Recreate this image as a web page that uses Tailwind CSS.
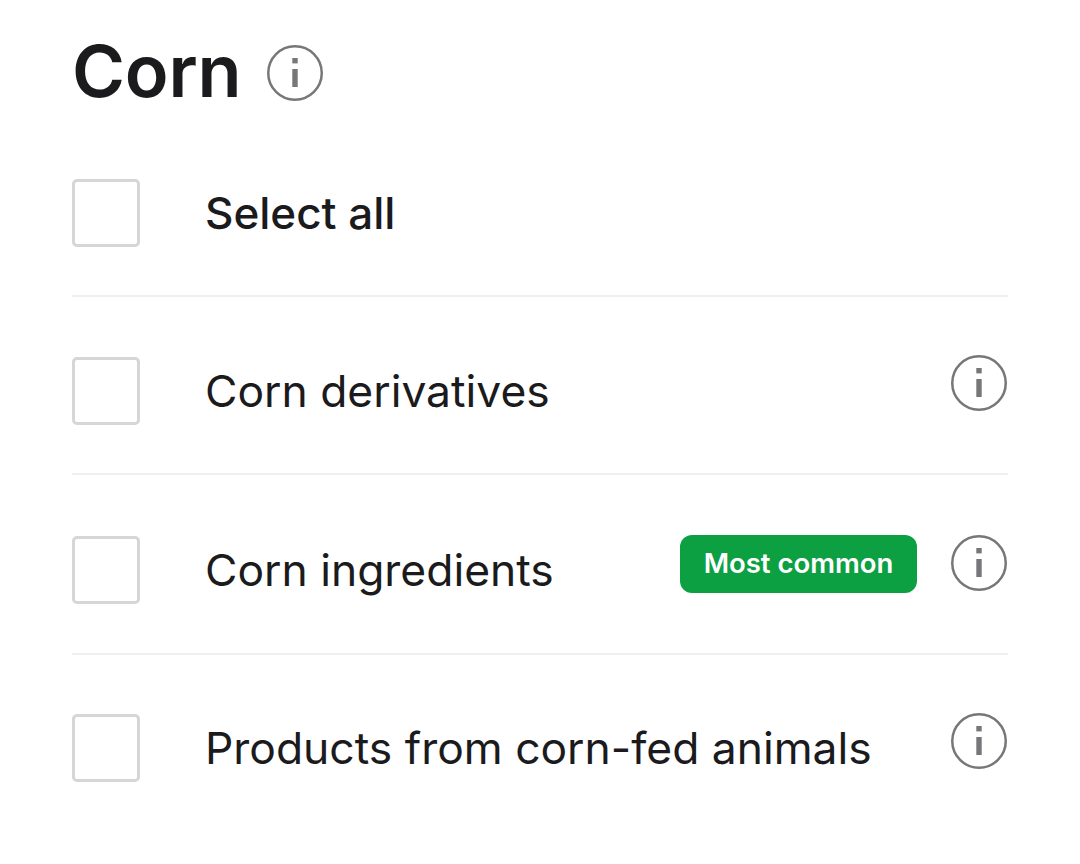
<!DOCTYPE html>
<html><head><meta charset="utf-8"><script src="https://cdn.jsdelivr.net/npm/@tailwindcss/browser@4"></script></head>
<body class="bg-white">
<div class="w-[1080px] h-[864px] overflow-hidden pl-[72px] pr-[72px] pt-[45px] text-[#1b1b1d] font-['Inter',sans-serif]">
  <div class="flex items-center h-[56px]">
    <h1 class="w-[195px] pb-[5px] text-[72px] leading-[56px] font-semibold tracking-[-0.25px]">Corn</h1>
    <svg class="w-[56px] h-[56px]" viewBox="0 0 56 56" fill="none"><circle cx="28" cy="28" r="26.75" stroke="#77777a" stroke-width="2.5"/><rect x="25.3" y="13" width="5.4" height="5.4" fill="#77777a"/><rect x="25.3" y="24" width="5.4" height="18" fill="#77777a"/></svg>
  </div>
  <div class="flex items-center pt-[78px] pb-[48px] border-b-2 border-[#efefef]">
    <div class="w-[68px] h-[68px] rounded-[5px] border-[3px] border-[#d6d6d6] shrink-0"></div>
    <span class="ml-[65px] text-[44px] leading-[50px] font-medium">Select all</span>
  </div>
  <div class="flex items-center pt-[60px] pb-[48px] border-b-2 border-[#efefef]">
    <div class="w-[68px] h-[68px] rounded-[5px] border-[3px] border-[#d6d6d6] shrink-0"></div>
    <span class="ml-[65px] text-[44.4px] leading-[50px] flex-1">Corn derivatives</span>
    <svg class="w-[56px] h-[56px] -translate-y-[8px] -translate-x-[1px]" viewBox="0 0 56 56" fill="none"><circle cx="28" cy="28" r="26.75" stroke="#77777a" stroke-width="2.5"/><rect x="25.3" y="13" width="5.4" height="5.4" fill="#77777a"/><rect x="25.3" y="24" width="5.4" height="18" fill="#77777a"/></svg>
  </div>
  <div class="flex items-center pt-[61px] pb-[49px] border-b-2 border-[#efefef]">
    <div class="w-[68px] h-[68px] rounded-[5px] border-[3px] border-[#d6d6d6] shrink-0"></div>
    <span class="ml-[65px] text-[44.4px] leading-[50px] flex-1">Corn ingredients</span>
    <span class="w-[237px] h-[58px] mr-[34px] -translate-x-[1px] -translate-y-[6px] rounded-[12px] bg-[#0ca043] text-white text-[27.5px] font-semibold flex items-center justify-center">Most common</span>
    <svg class="w-[56px] h-[56px] -translate-y-[7px] -translate-x-[1px]" viewBox="0 0 56 56" fill="none"><circle cx="28" cy="28" r="26.75" stroke="#77777a" stroke-width="2.5"/><rect x="25.3" y="13" width="5.4" height="5.4" fill="#77777a"/><rect x="25.3" y="24" width="5.4" height="18" fill="#77777a"/></svg>
  </div>
  <div class="flex items-center pt-[59px]">
    <div class="w-[68px] h-[68px] rounded-[5px] border-[3px] border-[#d6d6d6] shrink-0"></div>
    <span class="ml-[65px] text-[44.4px] leading-[50px] flex-1">Products from corn-fed animals</span>
    <svg class="w-[56px] h-[56px] -translate-y-[7px] -translate-x-[1px]" viewBox="0 0 56 56" fill="none"><circle cx="28" cy="28" r="26.75" stroke="#77777a" stroke-width="2.5"/><rect x="25.3" y="13" width="5.4" height="5.4" fill="#77777a"/><rect x="25.3" y="24" width="5.4" height="18" fill="#77777a"/></svg>
  </div>
</div>
</body></html>
